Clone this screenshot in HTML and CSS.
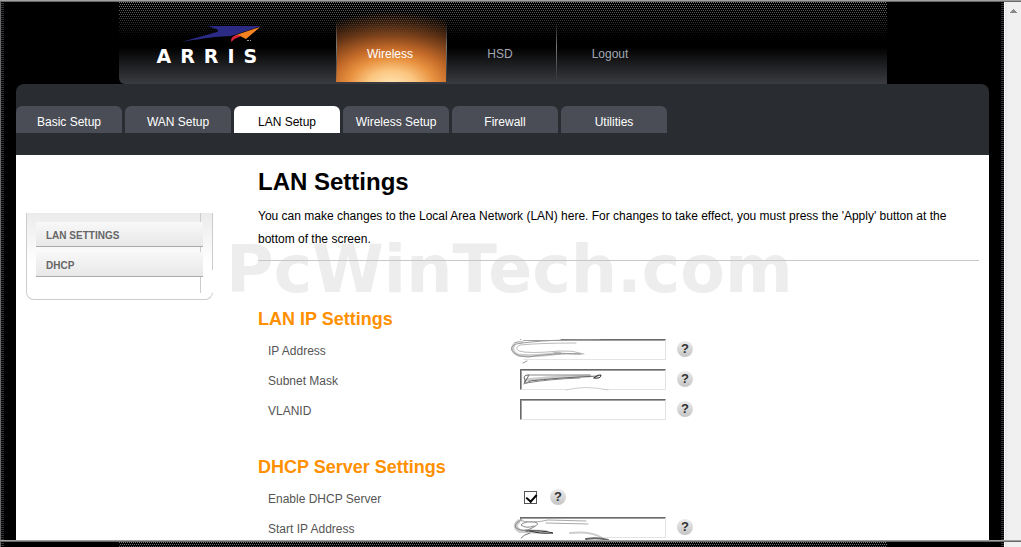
FILE: index.html
```html
<!DOCTYPE html>
<html lang="en">
<head>
<meta charset="utf-8">
<title>LAN Settings</title>
<link rel="stylesheet" href="styles.css">
</head>
<body>
<div class="frame frame-top">
  <div class="page">
    <header class="header">
      <a class="logo" href="#" aria-label="ARRIS">
        <svg class="logo-mark" viewBox="0 0 80 18" aria-hidden="true">
          <path fill="#2b2b85" d="M0 16 36 6Q39 4 35 3L27 0H80L50 10Q36 10 0 16Z"/>
          <path fill="#f58220" d="M79 1 65 13 59 10Q54 11 51 15Q51 10 58 8Z"/>
          <path fill="#d9203a" d="M57 9Q49 10 50 16Q54 12 60 10Z"/>
          <path fill="#999" d="M66 14h2v1h-2zM69 14h1v1h-1z"/>
        </svg>
        <span class="logo-text">ARRIS</span>
      </a>
      <nav class="main-nav">
        <a class="nav-link active" href="#">Wireless</a>
        <a class="nav-link" href="#">HSD</a>
        <a class="nav-link" href="#">Logout</a>
      </nav>
    </header>
    <nav class="tabs">
      <a class="tab" href="#">Basic Setup</a>
      <a class="tab" href="#">WAN Setup</a>
      <a class="tab active" href="#">LAN Setup</a>
      <a class="tab" href="#">Wireless Setup</a>
      <a class="tab" href="#">Firewall</a>
      <a class="tab" href="#">Utilities</a>
    </nav>
    <div class="body">
      <div class="watermark">PcWinTech.com</div>
      <aside class="sidebar">
        <a class="side-link" href="#">LAN SETTINGS</a>
        <a class="side-link" href="#">DHCP</a>
      </aside>
      <main class="content">
        <h1>LAN Settings</h1>
        <p class="intro">You can make changes to the Local Area Network (LAN) here. For changes to take effect, you must press the 'Apply' button at the bottom of the screen.</p>
        <hr>
        <section class="group">
          <h2>LAN IP Settings</h2>
          <div class="row">
            <label for="ip">IP Address</label>
            <span class="field"><input class="text" id="ip" type="text">
              <svg class="scribble" viewBox="0 0 170 32" aria-hidden="true">
                <g fill="none" stroke-linecap="round">
                  <path stroke="#fff" stroke-width="5" d="M11 7V23"/>
                  <path stroke="#fff" stroke-width="2" d="M12 4 50 4"/>
                  <path stroke="#ccc" stroke-width="3" d="M4 10Q0 16 8 20Q24 22 50 18"/>
                  <path stroke="#999" d="M90 5Q35 4 6 9Q-2 12 4 18Q9 22 18 22Q40 18 72 19"/>
                  <path stroke="#bbb" d="M66 8Q30 8 10 10Q4 13 9 16Q18 19 50 16Q62 15 74 19"/>
                  <path stroke="#999" d="M44 18 70 19M13 28 17 26M4 8Q8 6 13 7"/>
                </g>
              </svg>
            </span>
            <button class="help" type="button" aria-label="Help: IP Address">?</button>
          </div>
          <div class="row">
            <label for="mask">Subnet Mask</label>
            <span class="field"><input class="text" id="mask" type="text">
              <svg class="scribble" viewBox="0 0 170 32" aria-hidden="true">
                <g fill="none" stroke-linecap="round">
                  <path stroke="#ccc" stroke-width="3" d="M16 15Q40 12 80 11"/>
                  <path stroke="#666" d="M14 19 19 10Q12 10 15 15Q13 21 20 16Q45 13 88 11"/>
                  <path stroke="#888" d="M18 10H80M16 18Q40 14 70 13"/>
                  <path stroke="#222" d="M84 13Q91 14 91 10Q88 9 84 13"/>
                  <path stroke="#fff" stroke-width="2" d="M60 25Q78 23 92 25"/>
                  <path stroke="#ccc" d="M56 25Q76 20 98 25"/>
                </g>
              </svg>
            </span>
            <button class="help" type="button" aria-label="Help: Subnet Mask">?</button>
          </div>
          <div class="row">
            <label for="vlan">VLANID</label>
            <span class="field"><input class="text" id="vlan" type="text"></span>
            <button class="help" type="button" aria-label="Help: VLANID">?</button>
          </div>
        </section>
        <section class="group">
          <h2>DHCP Server Settings</h2>
          <div class="row">
            <label for="dhcp">Enable DHCP Server</label>
            <input class="check" id="dhcp" type="checkbox" checked>
            <button class="help" type="button" aria-label="Help: Enable DHCP Server">?</button>
          </div>
          <div class="row">
            <label for="start">Start IP Address</label>
            <span class="field"><input class="text" id="start" type="text">
              <svg class="scribble" viewBox="0 0 170 32" aria-hidden="true">
                <g fill="none" stroke-linecap="round">
                  <path stroke="#fff" stroke-width="5" d="M11 9V24M12 24H80"/>
                  <path stroke="#ccc" stroke-width="4" d="M8 9Q3 14 10 18L36 19"/>
                  <path stroke="#888" d="M12 7Q3 10 6 15Q14 20 22 15Q32 10 24 9Q14 8 11 12Q16 16 24 13"/>
                  <path stroke="#aaa" d="M8 7Q22 11 38 7L76 8M36 10 78 11"/>
                  <path stroke="#333" d="M16 18Q32 17 43 20Q30 21 20 18"/>
                  <path stroke="#777" d="M11 25Q13 22 20 20"/>
                  <path stroke="#ccc" stroke-width="2" d="M60 20Q82 18 92 25"/>
                  <path stroke="#666" stroke-width="2" d="M76 26Q88 24 98 27"/>
                </g>
              </svg>
            </span>
            <button class="help" type="button" aria-label="Help: Start IP Address">?</button>
          </div>
        </section>
      </main>
    </div>
  </div>
  <div class="scrollbar">
    <svg class="arrow" viewBox="0 0 7 4" aria-hidden="true"><path fill="#888" d="M3 0h1v1h1v1h1v1h1v1H0V3h1V2h1V1h1z"/></svg>
  </div>
</div>
<div class="frame frame-bottom">
  <div class="page"><div class="header"></div></div>
  <div class="scrollbar"></div>
</div>
</body>
</html>
```
FILE: styles.css
```css
* { box-sizing: border-box; }

body {
  display: flex;
  flex-direction: column;
  height: 100vh;
  margin: 0;
  overflow: hidden;
  background: #000;
  color: #000;
  font: 12px "Liberation Sans", Arial, sans-serif;
}

a { color: inherit; text-decoration: none; }

.frame {
  display: flex;
  overflow: hidden;
  border-top: 1px solid #a0a0a0;
  box-shadow: inset 0 1px #696969;
  padding-top: 1px;
}
.frame-top { flex: 1; min-height: 0; }
.frame-bottom { height: 7px; flex: none; }

.page {
  flex: 1;
  min-width: 0;
  padding: 0 15px;
  border-left: 1px solid #696969;
  background:
    repeating-linear-gradient(#000 0 1px, #33363a 1px 2px) left / 3px 100% no-repeat,
    repeating-linear-gradient(#000 0 1px, #33363a 1px 2px) right / 3px 100% no-repeat,
    #000;
}

.scrollbar {
  width: 17px;
  flex: none;
  padding-top: 7px;
  border-left: 1px solid #fff;
  background: linear-gradient(90deg, #e6e6e6, #f0f0f0 3px);
}
.arrow { display: block; width: 7px; height: 4px; margin: 0 auto; }

.header {
  position: relative;
  display: flex;
  max-width: 768px;
  height: 82px;
  margin: 0 auto;
  border-bottom-left-radius: 6px;
  background: linear-gradient(#000 45px, #1c1d1f 62px, #3a3c41 82px);
}
/* staggered dot screen fading out downwards */
.header::before {
  content: "";
  position: absolute;
  z-index: 1;
  inset: 0 0 auto;
  height: 36px;
  background:
    conic-gradient(from 270deg at 1px 1px, #75777a 90deg, transparent 0) 0 0 / 4px 4px,
    conic-gradient(from 270deg at 1px 1px, #75777a 90deg, transparent 0) 2px 0 / 4px 4px,
    conic-gradient(from 270deg at 1px 1px, #75777a 90deg, transparent 0) 1px 2px / 4px 4px,
    conic-gradient(from 270deg at 1px 1px, #75777a 90deg, transparent 0) 3px 2px / 4px 4px;
  mask: linear-gradient(#000, transparent);
  pointer-events: none;
}

.logo { position: relative; z-index: 2; width: 217px; padding: 24px 0 0 38px; color: #fff; }
.logo-mark { display: block; width: 80px; height: 18px; margin-left: 24px; }
.logo-text {
  display: block;
  font: bold 19px/24px "DejaVu Sans", sans-serif;
  letter-spacing: 9px;
}

.main-nav { position: relative; display: flex; height: 80px; }
.nav-link {
  width: 110px;
  padding-right: 2px;
  border-left: 1px solid;
  border-image: linear-gradient(transparent 25%, #777 55%, #555 75%, transparent) 1;
  color: #a3a7b3;
  line-height: 105px;
  text-align: center;
}
.nav-link.active {
  color: #fff;
  background: radial-gradient(120px 74px at 50% 104%, #ffe6b8 0, #fbc680 20%, #e8913f 36%, #c46a29 50%, #7d421b 68%, #3a1d0a 85%, transparent);
}

.tabs {
  display: flex;
  gap: 3px;
  height: 71px;
  padding-top: 22px;
  border-radius: 8px 8px 0 0;
  background: #292c31;
}
.tab {
  width: 106px;
  height: 27px;
  border-radius: 6px 6px 0 0;
  background: #4a4d56;
  color: #fff;
  line-height: 32px;
  text-align: center;
}
.tab.active { background: #fff; color: #000; }

.body {
  position: relative;
  z-index: 0;
  display: flex;
  gap: 45px;
  min-height: 100%;
  padding: 0 10px;
  background: #fff;
}

.watermark {
  position: absolute;
  z-index: -1;
  top: 90px;
  left: 210px;
  color: #ededed;
  font: bold 65px/50px "DejaVu Sans", sans-serif;
}

.sidebar {
  position: relative;
  width: 187px;
  height: 87px;
  flex: none;
  margin-top: 58px;
  padding: 9px 9px 0;
  border: 1px solid #ccc;
  border-top: 0;
  border-radius: 0 0 8px 8px;
  background: linear-gradient(90deg, transparent 173px, #ccc 173px 174px, transparent 174px) 0 0 / 100% 80px no-repeat, linear-gradient(#ebebeb, #fff 50px);
}
/* gap in the right border */
.sidebar::after {
  content: "";
  position: absolute;
  top: 57px;
  right: -1px;
  width: 1px;
  height: 23px;
  background: #fff;
}
.side-link {
  display: block;
  height: 25px;
  margin-bottom: 5px;
  padding-left: 10px;
  border-bottom: 1px solid #aaa;
  background: linear-gradient(#f8f8f8, #e8e8e8);
  color: #666;
  font: bold 10px/27px "Liberation Sans", Arial, sans-serif;
}

.content { flex: 1; min-width: 0; }
h1 { margin: 13px 0 9px; font-size: 24px; line-height: 28px; }
.intro { margin: 0; line-height: 23px; }
hr { margin: 9px 0 45px; border: 0; border-top: 1px solid #c8c8c8; }

.group { margin-bottom: 29px; }
h2 { margin: 0 0 3px; color: #ff9000; font-size: 18px; line-height: 26px; }
.row { display: flex; align-items: center; height: 30px; padding-left: 10px; color: #555; }
.row label { width: 252px; padding-top: 2px; }

.field { position: relative; display: flex; width: 146px; margin-bottom: 2px; }
.text {
  width: 100%;
  height: 21px;
  padding: 1px 4px;
  border: 1px solid;
  border-color: #696969 #e3e3e3 #e3e3e3 #696969;
  box-shadow: inset 1px 1px #a0a0a0;
  background: #fff;
  font: inherit;
}
.scribble {
  position: absolute;
  top: -4px;
  left: -10px;
  width: 170px;
  height: 32px;
  pointer-events: none;
}

.check {
  appearance: none;
  width: 13px;
  height: 13px;
  margin: 0 2px 2px 4px;
  border: 1px solid #555;
  background: #fff;
}
.check:checked::before {
  content: "";
  display: block;
  width: 5px;
  height: 8px;
  margin: 0 0 0 3px;
  border: solid #000;
  border-width: 0 2px 2px 0;
  transform: rotate(42deg);
}

.help {
  width: 16px;
  height: 16px;
  margin: 0 0 2px 11px;
  padding: 0;
  border: 0;
  border-radius: 50%;
  background: linear-gradient(#ececec, #c4c4c4);
  color: #333;
  font: bold 13px/16px "Liberation Sans", Arial, sans-serif;
}
```
